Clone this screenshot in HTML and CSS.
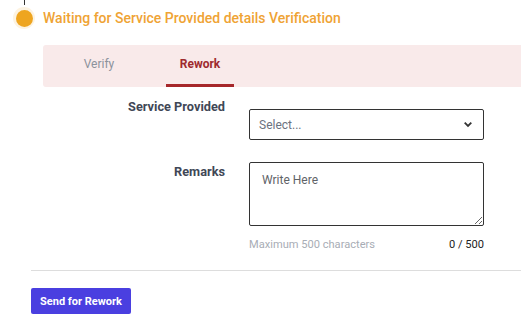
FILE: index.html
```html
<!DOCTYPE html>
<html lang="en">
<head>
<meta charset="utf-8">
<title>Rework</title>
<link rel="stylesheet" href="styles.css">
</head>
<body>
<div class="page">
  <div class="stem"></div>
  <div class="step-head">
    <span class="dot"><span class="dot-inner"></span></span>
    <h2 class="step-title">Waiting for Service Provided details Verification</h2>
  </div>
  <div class="tabs">
    <div class="tab">Verify</div>
    <div class="tab active">Rework</div>
  </div>
  <div class="form">
    <label class="label label-first">Service Provided</label>
    <div class="select">
      <span class="select-text">Select...</span>
      <svg class="chev" width="10" height="7" viewBox="0 0 10 7"><path d="M1.7 1.7 L5 5 L8.3 1.7" fill="none" stroke="#333" stroke-width="1.8"/></svg>
    </div>
    <label class="label label-second">Remarks</label>
    <div class="remarks">
      <textarea class="textarea" placeholder="Write Here"></textarea>
      <div class="hint"><span class="hint-max">Maximum 500 characters</span><span class="hint-count">0 / 500</span></div>
    </div>
  </div>
  <hr class="divider">
  <button class="btn">Send for Rework</button>
</div>
</body>
</html>
```
FILE: styles.css
```css
html, body { margin: 0; padding: 0; background: #fff; }
body { font-family: Roboto, "Noto Sans", "Liberation Sans", sans-serif; }
.page { width: 521px; height: 326px; overflow: hidden; }
.stem { width: 1px; height: 5px; background: #333; margin-left: 24px; }
.step-head { display: flex; align-items: center; height: 26px; margin-top: 0; }
.dot { width: 22px; height: 22px; border-radius: 50%; background: #FDF3E1; margin-left: 13px; display: flex; align-items: center; justify-content: center; }
.dot-inner { width: 17px; height: 17px; border-radius: 50%; background: #EEA520; }
.step-title { margin: 0 0 0 8px; font-size: 14px; font-weight: 500; color: #EFA334; line-height: 20px; }
.tabs { margin: 14px 0 0 43px; height: 42px; background: #F9EAEA; border-radius: 3px 0 0 3px; display: flex; gap: 33px; padding-left: 22px; box-sizing: border-box; }
.tab { width: 68px; text-align: center; font-size: 12px; color: #8C929C; line-height: 39px; border-bottom: 3px solid transparent; box-sizing: border-box; height: 42px; }
.tab.active { color: #9E2A2F; font-weight: 700; border-bottom-color: #A6272B; }
.form { display: grid; grid-template-columns: 182px 235px; column-gap: 24px; margin: 12px 0 0 43px; }
.label { text-align: right; font-size: 12.75px; font-weight: 700; color: #3F4756; line-height: 16px; }
.label-first { margin-top: 0; }
.label-second { margin-top: 24px; }
.select { margin-top: 10px; height: 31px; border: 1px solid #333; border-radius: 2px; box-sizing: border-box; display: flex; align-items: center; justify-content: space-between; padding: 0 10px 0 9px; }
.select-text { font-size: 12px; color: #6B7280; }
.chev { display: block; }
.remarks { margin-top: 22px; }
.textarea { display: block; width: 235px; height: 64px; box-sizing: border-box; border: 1px solid #333; border-radius: 2px; padding: 10px 12px; font-family: inherit; font-size: 12px; margin: 0; resize: vertical; }
.textarea::placeholder { color: #5F6368; }
.hint { display: flex; justify-content: space-between; margin-top: 12px; font-size: 11.1px; line-height: 14px; }
.hint-max { color: #A8ADB5; }
.hint-count { color: #222; }
.divider { border: 0; border-top: 1px solid #DDDDDD; margin: 18px 0 0 31px; }
.btn { margin: 17px 0 0 31px; width: 100px; height: 26px; border: 0; border-radius: 2px; background: #4A3FE0; color: #fff; font-family: inherit; font-size: 11px; font-weight: 700; padding: 0; }
```
